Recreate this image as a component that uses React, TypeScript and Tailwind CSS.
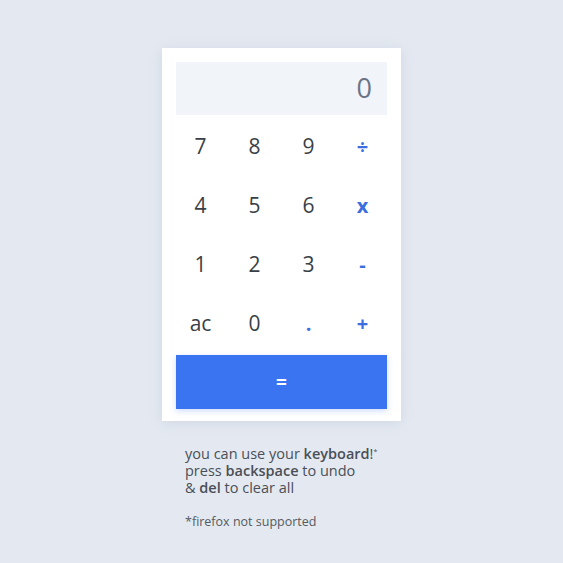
import React from "react";

const keys: { label: string; op?: boolean }[] = [
  { label: "7" }, { label: "8" }, { label: "9" }, { label: "÷", op: true },
  { label: "4" }, { label: "5" }, { label: "6" }, { label: "x", op: true },
  { label: "1" }, { label: "2" }, { label: "3" }, { label: "-", op: true },
  { label: "ac" }, { label: "0" }, { label: ".", op: true }, { label: "+", op: true },
];

export default function App() {
  return (
    <div
      className="min-h-screen bg-[#e4e9f1] flex flex-col items-center pt-[48px]"
      style={{ fontFamily: "'Open Sans', Lato, sans-serif" }}
    >
      <div className="w-[239px] bg-white px-[14px] pt-[14px] pb-[12px] shadow-[0_2px_12px_rgba(120,140,170,0.18)]">
        <div className="h-[53px] bg-[#f1f4f9] flex items-center justify-end pr-[15px] text-[27px] text-[#6b7487]">
          0
        </div>
        <div className="grid grid-cols-[repeat(4,54px)] justify-center -mx-[3px] mt-[2px]">
          {keys.map((k) => (
            <div
              key={k.label}
              className={
                "h-[59px] flex items-center justify-center " +
                (k.op ? "text-[#3b6fe0] text-[20px] font-bold" : "text-[#3a3f47] text-[21px]")
              }
            >
              {k.label}
            </div>
          ))}
        </div>
        <div className="mt-[2px] h-[54px] bg-[#3b74f0] flex items-center justify-center text-white text-[19px] font-bold shadow-[0_2px_6px_rgba(59,116,240,0.25)]">
          =
        </div>
      </div>
      <div className="w-[239px] pl-[23px] mt-[24px] text-[#4a4f57] text-[14.5px] leading-[17px]">
        <div className="h-[17px]">
          you can use your <span className="font-semibold">keyboard</span>!<span className="relative -top-[5px] text-[7px] leading-none">*</span>
        </div>
        <div className="h-[17px]">
          press <span className="font-semibold">backspace</span> to undo
        </div>
        <div className="h-[17px]">
          &amp; <span className="font-semibold">del</span> to clear all
        </div>
        <div className="mt-[17px] text-[12.5px] leading-[17px] text-[#555a62]">*firefox not supported</div>
      </div>
    </div>
  );
}
